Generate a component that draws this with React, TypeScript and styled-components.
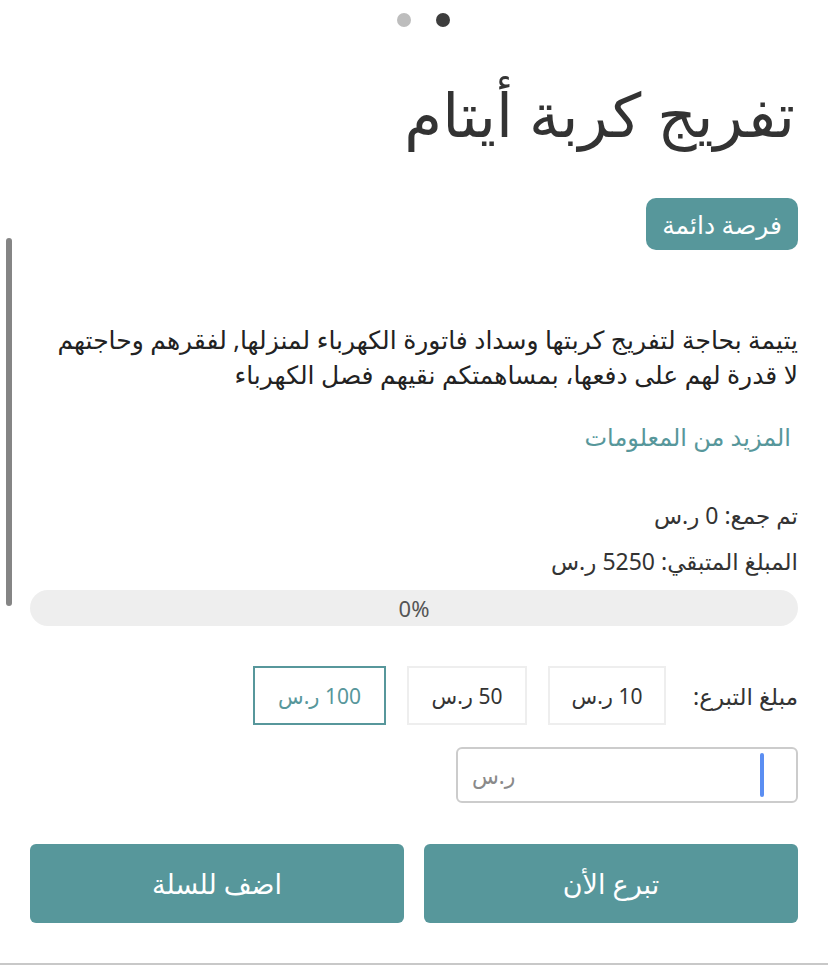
import { createGlobalStyle } from 'styled-components'
import styled from 'styled-components'

const GlobalStyle = createGlobalStyle`
  html, body {
    margin: 0;
    padding: 0;
    background: #ffffff;
  }
  body {
    font-family: "Noto Sans", "DejaVu Sans", sans-serif;
    color: #333333;
  }
`

const Page = styled.div`
  position: relative;
  width: 828px;
  height: 965px;
  box-sizing: border-box;
  padding: 0 30px;
  direction: rtl;
  overflow: hidden;
  border-bottom: 2px solid #c8c8c8;
`

const ScrollThumb = styled.div`
  position: absolute;
  left: 6px;
  top: 238px;
  width: 6px;
  height: 368px;
  border-radius: 3px;
  background: #858585;
`

const Dots = styled.div`
  display: flex;
  justify-content: center;
  gap: 25px;
  padding-top: 13px;
  margin-left: 19px;
`

const Dot = styled.span<{ $active?: boolean }>`
  width: 14px;
  height: 14px;
  border-radius: 50%;
  background: ${p => (p.$active ? '#3d3d3d' : '#bdbdbd')};
`

const Title = styled.h1`
  margin: 47px 3px 0 0;
  font-size: 61px;
  font-weight: 500;
  line-height: 80px;
  color: #333333;
`

const BadgeRow = styled.div`
  display: flex;
  margin-top: 44px;
`

const Badge = styled.span`
  background: #57979b;
  color: #ffffff;
  border-radius: 10px;
  padding: 0 16px;
  height: 52px;
  display: flex;
  align-items: center;
  font-size: 25px;
`

const Description = styled.p`
  margin: 72px 0 0;
  font-size: 25px;
  line-height: 35px;
  color: #222222;
`

const MoreLink = styled.a`
  display: block;
  margin: 28px 7px 0 0;
  font-size: 24px;
  color: #57979b;
  text-decoration: none;
`

const Stat = styled.div<{ $top: number }>`
  margin-top: ${p => p.$top}px;
  font-size: 23px;
  line-height: 30px;
  color: #333333;
`

const Progress = styled.div`
  margin-top: 14px;
  height: 36px;
  border-radius: 18px;
  background: #eeeeee;
  display: flex;
  align-items: center;
  justify-content: center;
  font-size: 22px;
  color: #555555;
`

const AmountRow = styled.div`
  display: flex;
  align-items: center;
  margin-top: 40px;
`

const AmountLabel = styled.span`
  font-size: 23px;
  color: #333333;
  margin-left: 27px;
`

const AmountOption = styled.button<{ $selected?: boolean; $w: number }>`
  width: ${p => p.$w}px;
  height: 59px;
  margin-left: 21px;
  background: #ffffff;
  border: ${p => (p.$selected ? '2px solid #57979b' : '2px solid #eeeeee')};
  color: ${p => (p.$selected ? '#57979b' : '#333333')};
  font-family: inherit;
  font-size: 21px;
  direction: rtl;
  cursor: pointer;
`

const InputRow = styled.div`
  display: flex;
  margin-top: 22px;
`

const Field = styled.div`
  width: 342px;
  height: 56px;
  box-sizing: border-box;
  border: 2px solid #cccccc;
  border-radius: 6px;
  display: flex;
  align-items: center;
  justify-content: space-between;
  padding: 0 32px 0 14px;
`

const Caret = styled.span`
  width: 4px;
  height: 44px;
  border-radius: 2px;
  background: #5b8ef2;
`

const Placeholder = styled.span`
  font-size: 22px;
  color: #8a8a8a;
`

const Actions = styled.div`
  display: grid;
  grid-template-columns: 1fr 1fr;
  gap: 20px;
  margin-top: 41px;
`

const ActionButton = styled.button`
  height: 79px;
  border: none;
  border-radius: 6px;
  background: #57979b;
  color: #ffffff;
  font-family: inherit;
  font-size: 27px;
  cursor: pointer;
`

export default function App() {
  return (
    <>
      <GlobalStyle />
      <Page>
        <ScrollThumb />
        <Dots>
          <Dot $active />
          <Dot />
        </Dots>
        <Title>تفريج كربة أيتام</Title>
        <BadgeRow>
          <Badge>فرصة دائمة</Badge>
        </BadgeRow>
        <Description>
          يتيمة بحاجة لتفريج كربتها وسداد فاتورة الكهرباء لمنزلها, لفقرهم وحاجتهم
          <br />
          لا قدرة لهم على دفعها، بمساهمتكم نقيهم فصل الكهرباء
        </Description>
        <MoreLink href="#">المزيد من المعلومات</MoreLink>
        <Stat $top={47}>تم جمع: 0 ر.س</Stat>
        <Stat $top={16}>المبلغ المتبقي: 5250 ر.س</Stat>
        <Progress>0%</Progress>
        <AmountRow>
          <AmountLabel>مبلغ التبرع:</AmountLabel>
          <AmountOption $w={118}>10 ر.س</AmountOption>
          <AmountOption $w={120}>50 ر.س</AmountOption>
          <AmountOption $w={133} $selected>100 ر.س</AmountOption>
        </AmountRow>
        <InputRow>
          <Field>
            <Caret />
            <Placeholder>ر.س</Placeholder>
          </Field>
        </InputRow>
        <Actions>
          <ActionButton>تبرع الأن</ActionButton>
          <ActionButton>اضف للسلة</ActionButton>
        </Actions>
      </Page>
    </>
  )
}
